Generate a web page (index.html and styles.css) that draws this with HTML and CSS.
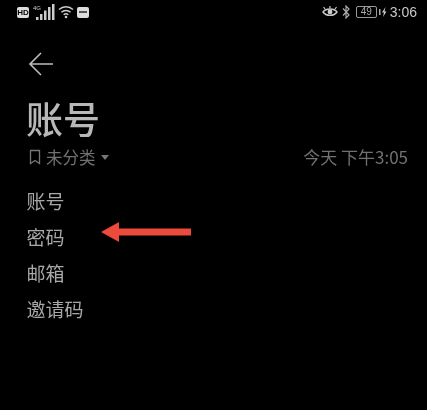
FILE: index.html
```html
<!DOCTYPE html>
<html lang="zh-CN">
<head>
  <meta charset="utf-8" />
  <title>账号</title>
  <meta name="viewport" content="width=device-width, initial-scale=1" />
  <link rel="stylesheet" href="styles.css">
</head>
<body>
  <div class="screen">
    <!-- STATUS BAR -->
    <div class="statusBar">
      <div class="statusLeft">
        <span class="hdBadge">HD</span>
        <svg class="signal" width="22" height="18" viewBox="0 0 22 18">
          <text x="0" y="7" class="netText">4G</text>
          <rect x="3" y="14" width="2.5" height="3" fill="#ccc"/>
          <rect x="7" y="11" width="2.5" height="6" fill="#ccc"/>
          <rect x="11" y="7.5" width="2.5" height="9.5" fill="#ccc"/>
          <rect x="15" y="4" width="2.5" height="13" fill="#ccc"/>
          <rect x="19" y="1" width="2.5" height="16" fill="#ccc"/>
        </svg>
        <svg class="wifi" width="16" height="14" viewBox="0 0 16 14">
          <path d="M1 4.5 C5 .8 11 .8 15 4.5 M3.4 7.2 C6 4.9 10 4.9 12.6 7.2 M5.7 9.8 C7 8.7 9 8.7 10.3 9.8" fill="none" stroke="#ccc" stroke-width="1.5"/>
          <circle cx="8" cy="12" r="1.3" fill="#ccc"/>
        </svg>
        <span class="saverBadge"></span>
      </div>
      <div class="statusRight">
        <svg class="eye" width="16" height="12" viewBox="0 0 16 12">
          <path d="M1 6 C4 2 12 2 15 6 C12 10.5 4 10.5 1 6 Z" fill="none" stroke="#ccc" stroke-width="1.4"/>
          <circle cx="8" cy="6" r="2.4" fill="#ccc"/>
          <path d="M3 3 L1.5 1 M8 2 V0 M13 3 L14.5 1" stroke="#ccc" stroke-width="1.2"/>
        </svg>
        <svg class="bluetooth" width="8" height="14" viewBox="0 0 8 14">
          <path d="M1 3.5 L7 10 L4 13 V1 L7 4 L1 10.5" fill="none" stroke="#aaa" stroke-width="1.2"/>
        </svg>
        <span class="battery">49</span>
        <svg class="charge" width="8" height="12" viewBox="0 0 8 12">
          <rect x="0" y="3" width="1.5" height="6" fill="#aaa"/>
          <path d="M6.5 1 L3 6.5 H5 L4 11 L7.5 5.5 H5.5 Z" fill="#ccc"/>
        </svg>
        <span class="clock">3:06</span>
      </div>
    </div>

    <!-- BACK -->
    <svg class="backArrow" width="26" height="26" viewBox="0 0 26 26">
      <path d="M13 2 L2 13 L13 24 M2 13 H25" fill="none" stroke="#bdbdbd" stroke-width="1.6"/>
    </svg>

    <h1 class="noteTitle">账号</h1>

    <div class="metaRow">
      <div class="category">
        <svg class="bookmark" width="12" height="16" viewBox="0 0 12 16">
          <path d="M1.5 1.5 H10.5 V14.5 L6 11.5 L1.5 14.5 Z" fill="none" stroke="#777" stroke-width="1.3"/>
        </svg>
        <span>未分类</span>
        <span class="caret"></span>
      </div>
      <span class="noteDate">今天 下午3:05</span>
    </div>

    <!-- NOTE LINES -->
    <div class="noteBody">
      <div class="noteLine">账号</div>
      <div class="noteLine">密码
        <svg class="redArrow" width="90" height="20" viewBox="0 0 90 20">
          <path d="M0 10 L18 0 V6.5 H90 V13.5 H18 V20 Z" fill="#ec4b3c"/>
        </svg>
      </div>
      <div class="noteLine">邮箱</div>
      <div class="noteLine">邀请码</div>
    </div>
  </div>
</body>
</html>
```

FILE: styles.css
```css
/* ========== GLOBAL ========== */
* {
  box-sizing: border-box;
  margin: 0;
  padding: 0;
}
body {
  width: 427px;
  height: 410px;
  background: #000;
  font-family: "Noto Sans CJK SC", "Liberation Sans", sans-serif;
  color: #b5b5b5;
  overflow: hidden;
}
.screen {
  height: 100%;
  filter: blur(0.6px);
}

/* ========== STATUS BAR ========== */
.statusBar {
  height: 24px;
  padding: 0 10px 0 17px;
  display: flex;
  justify-content: space-between;
  align-items: center;
}
.statusLeft,
.statusRight {
  display: flex;
  align-items: center;
}
.hdBadge {
  width: 12px;
  height: 11px;
  border-radius: 2px;
  background: #ddd;
  color: #000;
  font-family: "Liberation Sans", sans-serif;
  font-size: 8px;
  font-weight: bold;
  line-height: 11px;
  text-align: center;
}
.signal {
  margin-left: 4px;
}
.netText {
  font-family: "Liberation Sans", sans-serif;
  font-size: 6px;
  fill: #ccc;
}
.wifi {
  margin-left: 3px;
}
.saverBadge {
  width: 12px;
  height: 11px;
  margin-left: 3px;
  border-radius: 2px;
  background: #ddd;
  position: relative;
}
.saverBadge::after {
  content: "";
  position: absolute;
  left: 2px;
  right: 2px;
  top: 4px;
  height: 2px;
  background: #555;
}
.bluetooth {
  margin-left: 4px;
}
.battery {
  width: 21px;
  height: 12px;
  margin-left: 6px;
  border: 1px solid #999;
  border-radius: 2px;
  color: #aaa;
  font-family: "Liberation Sans", sans-serif;
  font-size: 10px;
  line-height: 10px;
  text-align: center;
}
.charge {
  margin-left: 2px;
}
.clock {
  margin-left: 3px;
  color: #c8c8c8;
  font-family: "Liberation Sans", sans-serif;
  font-size: 14px;
  line-height: 16px;
}

/* ========== HEADER ========== */
.backArrow {
  display: block;
  margin: 27px 0 0 28px;
}
.noteTitle {
  margin: 19px 0 0 26px;
  color: #b8b8b8;
  font-size: 37px;
  font-weight: 500;
  line-height: 44px;
}
.metaRow {
  margin-top: 7px;
  padding: 0 19px 0 29px;
  display: flex;
  justify-content: space-between;
  align-items: center;
  color: #717171;
  font-size: 16.5px;
  line-height: 20px;
}
.noteDate {
  font-size: 17px;
}
.category {
  display: flex;
  align-items: center;
  gap: 5px;
}
.caret {
  width: 0;
  height: 0;
  border-left: 4px solid transparent;
  border-right: 4px solid transparent;
  border-top: 5px solid #777;
}

/* ========== NOTE LINES ========== */
.noteBody {
  margin-top: 16px;
  padding-left: 26.5px;
}
.noteLine {
  position: relative;
  height: 36px;
  color: #a8a8a8;
  font-size: 19px;
  line-height: 36px;
}
.redArrow {
  position: absolute;
  left: 74.5px;
  top: 3px;
}
```
